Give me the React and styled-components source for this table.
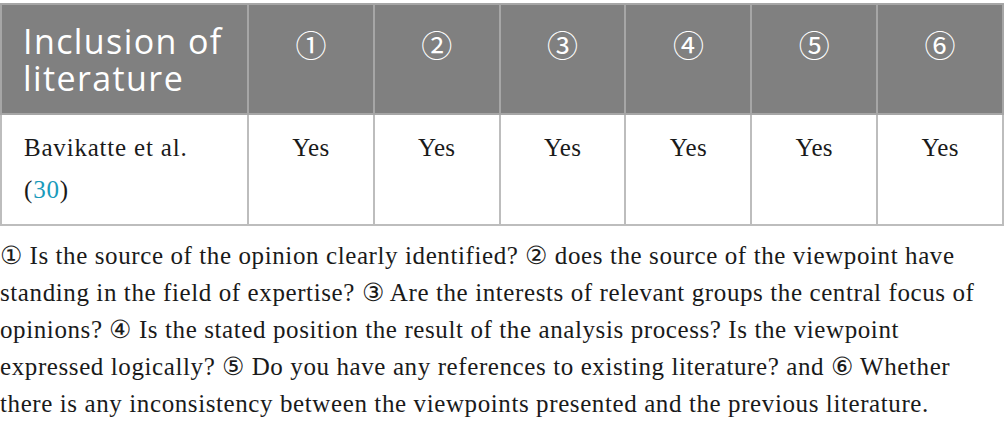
import React from 'react'
import styled, { createGlobalStyle } from 'styled-components'

const Global = createGlobalStyle`
  html, body { margin: 0; padding: 0; background: #fff; }
  body { font-family: "Liberation Serif", serif; color: #1a1a1a; }
`

const marks = ['①', '②', '③', '④', '⑤', '⑥']

const notes = [
  '① Is the source of the opinion clearly identified? ② does the source of the viewpoint have',
  'standing in the field of expertise? ③ Are the interests of relevant groups the central focus of',
  'opinions? ④ Is the stated position the result of the analysis process? Is the viewpoint',
  'expressed logically? ⑤ Do you have any references to existing literature? and ⑥ Whether',
  'there is any inconsistency between the viewpoints presented and the previous literature.',
]

export default function App() {
  return (
    <Page>
      <Global />
      <Table>
        <thead>
          <tr>
            <HeadCell $first>Inclusion of<br />literature</HeadCell>
            {marks.map((m) => <HeadCell key={m}><Mark>{m}</Mark></HeadCell>)}
          </tr>
        </thead>
        <tbody>
          <tr>
            <BodyCell $first>Bavikatte et al.<br />(<Ref>30</Ref>)</BodyCell>
            {marks.map((m) => <BodyCell key={m}>Yes</BodyCell>)}
          </tr>
        </tbody>
      </Table>
      <Caption>
        {notes.map((line) => <Line key={line}>{line}</Line>)}
      </Caption>
    </Page>
  )
}

const Page = styled.div`
  padding-top: 3px;
  width: 1005px;
`

const Table = styled.table`
  width: 1004px;
  border-collapse: collapse;
  table-layout: fixed;
  border: 2px solid #bdbdbd;
`

const HeadCell = styled.th`
  width: ${(p) => (p.$first ? '247px' : 'auto')};
  height: 110px;
  box-sizing: border-box;
  background: #808080;
  color: #fff;
  font-family: "Open Sans", sans-serif;
  font-weight: 400;
  font-size: 34px;
  letter-spacing: 1.4px;
  line-height: 37px;
  text-align: ${(p) => (p.$first ? 'left' : 'center')};
  vertical-align: top;
  padding: ${(p) => (p.$first ? '18px 6px 0 21px' : '20px 0 0')};
  border: 2px solid #a6a6a6;
`

const Mark = styled.span`
  font-family: "Noto Sans CJK JP", sans-serif;
  font-weight: 400;
  font-size: 31px;
  letter-spacing: 0;
`

const BodyCell = styled.td`
  height: 111px;
  box-sizing: border-box;
  font-size: 25px;
  letter-spacing: ${(p) => (p.$first ? '0.8px' : '0.3px')};
  line-height: 42px;
  text-align: ${(p) => (p.$first ? 'left' : 'center')};
  vertical-align: top;
  padding: ${(p) => (p.$first ? '12px 6px 0 22px' : '12px 0 0')};
  border: 2px solid #bdbdbd;
`

const Ref = styled.span`
  color: #1a9bbb;
`

const Caption = styled.div`
  margin-top: 11px;
  font-size: 25px;
  letter-spacing: 0.6px;
  line-height: 37px;
`

const Line = styled.div`
  white-space: nowrap;
`
